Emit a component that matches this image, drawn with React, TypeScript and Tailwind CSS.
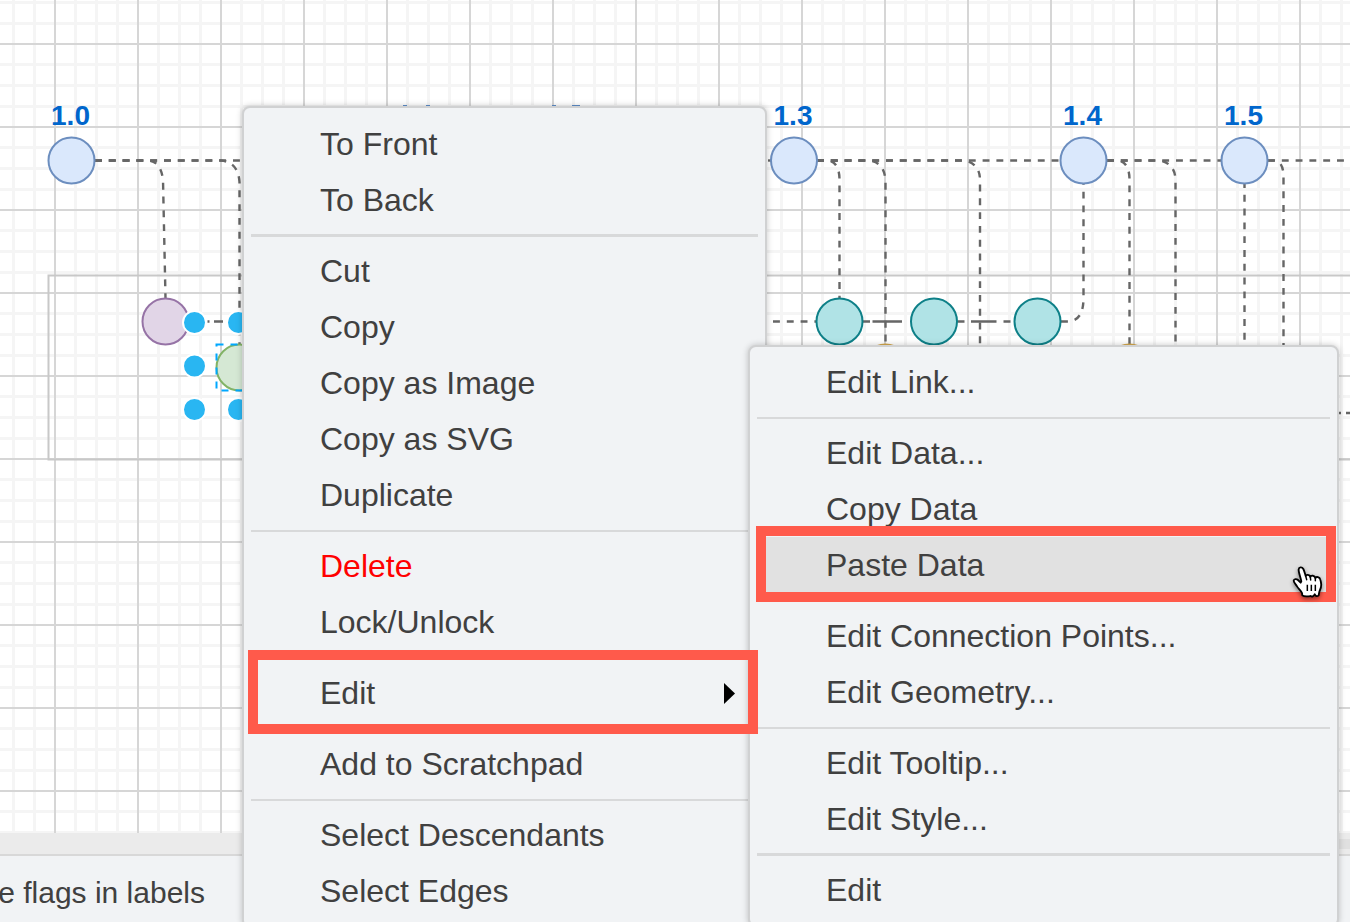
import React from "react";

type Entry =
  | { kind: "item"; label: string; danger?: boolean; active?: boolean; submenu?: boolean }
  | { kind: "separator"; heavy?: boolean };

const contextEntries: Entry[] = [
  { kind: "item", label: "To Front" },
  { kind: "item", label: "To Back" },
  { kind: "separator", heavy: true },
  { kind: "item", label: "Cut" },
  { kind: "item", label: "Copy" },
  { kind: "item", label: "Copy as Image" },
  { kind: "item", label: "Copy as SVG" },
  { kind: "item", label: "Duplicate" },
  { kind: "separator" },
  { kind: "item", label: "Delete", danger: true },
  { kind: "item", label: "Lock/Unlock" },
  { kind: "separator" },
  { kind: "item", label: "Edit", submenu: true },
  { kind: "separator" },
  { kind: "item", label: "Add to Scratchpad" },
  { kind: "separator" },
  { kind: "item", label: "Select Descendants" },
  { kind: "item", label: "Select Edges" },
];

const editEntries: Entry[] = [
  { kind: "item", label: "Edit Link..." },
  { kind: "separator" },
  { kind: "item", label: "Edit Data..." },
  { kind: "item", label: "Copy Data" },
  { kind: "item", label: "Paste Data", active: true },
  { kind: "separator" },
  { kind: "item", label: "Edit Connection Points..." },
  { kind: "item", label: "Edit Geometry..." },
  { kind: "separator" },
  { kind: "item", label: "Edit Tooltip..." },
  { kind: "item", label: "Edit Style..." },
  { kind: "separator", heavy: true },
  { kind: "item", label: "Edit" },
];

function Menu({ label, entries, className }: { label: string; entries: Entry[]; className: string }) {
  return (
    <div
      role="menu"
      aria-label={label}
      className={`absolute flex flex-col rounded-lg border-2 border-[#d0d1d2] bg-[#f1f3f5] px-[7px] pb-[7px] shadow-[0_0_6px_rgba(0,0,0,0.22)] ${className}`}
    >
      {entries.map((entry, i) =>
        entry.kind === "separator" ? (
          <div key={i} role="separator" className="flex h-[15px] items-center">
            <div className={`w-full bg-[#d8d9da] ${entry.heavy ? "h-[3px]" : "h-[2px]"}`} />
          </div>
        ) : (
          <button
            key={i}
            type="button"
            role="menuitem"
            aria-haspopup={entry.submenu ? "menu" : undefined}
            className={`flex h-14 items-center justify-between pr-[22px] pl-[69px] text-left text-[32px] leading-[56px] whitespace-nowrap ${
              entry.danger ? "text-[#ff0000]" : "text-[#404040]"
            } ${entry.active ? "bg-[#e1e1e1]" : ""}`}
          >
            <span>{entry.label}</span>
            {entry.submenu && (
              <svg width="12" height="22" viewBox="0 0 12 22" aria-hidden="true">
                <path d="M0 1 L11 11.5 L0 22 Z" fill="#000" />
              </svg>
            )}
          </button>
        )
      )}
    </div>
  );
}

const releases = [
  { x: 71.5, label: "1.0" },
  { x: 794, label: "1.3" },
  { x: 1083.5, label: "1.4" },
  { x: 1244.5, label: "1.5" },
];

const dashedEdges = [
  "M95 160.5 H390",
  "M95 160.5 H149 Q161 162 163 180 L165.5 298",
  "M95 160.5 H221 Q238 162 239.5 182 V344",
  "M768 160.5 H771",
  "M817 160.5 H1060",
  "M817 160.5 H829 Q839.5 163 839.5 180 V298",
  "M817 160.5 H869 Q884 162 885.5 180 V344",
  "M817 160.5 H965 Q980 164 980 180 V360",
  "M1107 160.5 H1221",
  "M1107 160.5 H1119 Q1129.5 163 1129.5 180 V344",
  "M1107 160.5 H1159 Q1175 163 1175.5 180 V360",
  "M1268 160.5 H1350",
  "M1268 160.5 H1274 Q1283.5 161 1283.5 177 V360",
  "M1061 321.5 H1068 Q1083.5 321 1083.5 298 V184",
  "M773 321.5 H816",
];

const solidEdges = [
  "M207.5 321.5 H209.5 M214 321.5 H223",
  "M863 321.5 H870 M872.5 321.5 H902",
  "M957.5 321.5 H964.5 M971 321.5 H996.5 M1003.5 321.5 H1010.5",
  "M1339 413 H1341 M1346 413 H1353",
];

const handles = [
  [194.5, 322.5],
  [194.5, 366],
  [194.5, 409.5],
  [238.5, 322.5],
  [238.5, 409.5],
];

function Diagram() {
  return (
    <svg className="block h-full w-full" aria-label="Release history diagram">
      <defs>
        <pattern id="grid" x="54" y="43" width="83" height="83" patternUnits="userSpaceOnUse">
          <g fill="#f5f5f5">
            <rect x="20" width="3" height="83" />
            <rect x="41" width="3" height="83" />
            <rect x="62" width="3" height="83" />
            <rect y="20" width="83" height="3" />
            <rect y="41" width="83" height="3" />
            <rect y="62" width="83" height="3" />
          </g>
          <rect width="2" height="83" fill="#d6d6d6" />
          <rect width="83" height="2" fill="#d6d6d6" />
        </pattern>
      </defs>
      <rect width="100%" height="100%" fill="#fff" />
      <rect width="100%" height="100%" fill="url(#grid)" />
      <rect x="48.5" y="275.5" width="1400" height="184" fill="none" stroke="#c8c8c8" strokeWidth="2" />

      <g fill="none" stroke="#666" strokeWidth="2.4">
        {dashedEdges.map((d) => (
          <path key={d} d={d} strokeDasharray="6.9 6.9" />
        ))}
        {solidEdges.map((d) => (
          <path key={d} d={d} />
        ))}
        <path d="M1244.5 184 V360" strokeDasharray="6.9 6.9" strokeDashoffset="3" />
      </g>

      <g strokeWidth="2">
        <g fill="#dae8fc" stroke="#6c8ebf">
          {releases.map((r) => (
            <circle key={r.label} cx={r.x} cy="160.5" r="23" />
          ))}
        </g>
        <circle cx="165.5" cy="321.5" r="23" fill="#e1d5e7" stroke="#9673a6" />
        <circle cx="239.5" cy="367.5" r="23" fill="#d5e8d4" stroke="#82b366" />
        <g fill="#b0e3e6" stroke="#0e8088">
          <circle cx="839.5" cy="321.5" r="23" />
          <circle cx="934" cy="321.5" r="23" />
          <circle cx="1037.5" cy="321.5" r="23" />
        </g>
        <g fill="#ffe6cc" stroke="#d6a94e">
          <circle cx="885.5" cy="367.5" r="23" />
          <circle cx="1129.5" cy="367.5" r="23" />
        </g>
      </g>

      <g fill="#0066cc" fontSize="28" fontWeight="700" textAnchor="middle">
        {releases.map((r) => (
          <text key={r.label} x={r.x - 1} y="125">
            {r.label}
          </text>
        ))}
      </g>
      <path d="M403 105.5 h4 M426 105.5 h4 M552 105.5 h4 M572 105.5 h8" stroke="#5f8fcb" strokeWidth="1" />

      <rect x="216.5" y="344.5" width="46" height="46" fill="none" stroke="#00a8ff" strokeWidth="2" strokeDasharray="7 7" />
      <g fill="#29b6f2" stroke="#fff" strokeWidth="2">
        {handles.map(([x, y]) => (
          <circle key={`${x}-${y}`} cx={x} cy={y} r="11.5" />
        ))}
      </g>
    </svg>
  );
}

function HandCursor() {
  return (
    <svg
      className="pointer-events-none absolute top-[560px] left-[1285px] h-11 w-11 drop-shadow-[0_2px_2px_rgba(0,0,0,0.45)]"
      viewBox="0 0 132 132"
      aria-hidden="true"
    >
      <path
        d="M52 106 L51 99 C48 92 40 86 36 79 C33 74 26 67 26 62 C27 56 35 56 39 60 L47 68 L49 64 C47 53 40 36 41 28 C42 21 51 20 55 27 C58 33 60 42 62 48 C63 43 74 43 76 51 C78 45 89 46 91 54 C94 49 104 50 106 59 C109 68 110 80 105 90 C102 96 102 101 101 106 C96 111 92 108 89 103 C86 109 81 111 77 108 C70 109 58 111 52 106 Z"
        fill="#fff"
        stroke="#000"
        strokeWidth="5.5"
        strokeLinejoin="round"
      />
      <path d="M62 48 L65 59 M76 51 L77 60 M91 54 L91 62" stroke="#000" strokeWidth="4.5" strokeLinecap="round" />
      <path d="M67 74 V93 M79 74 V93 M91 74 V93" stroke="#000" strokeWidth="4.5" />
    </svg>
  );
}

export default function App() {
  return (
    <div className="relative flex h-screen flex-col overflow-hidden bg-white font-['Liberation_Sans',Arial,sans-serif] text-[#404040]">
      <main className="min-h-0 flex-1">
        <Diagram />
      </main>
      <div className="flex h-[21px] items-center justify-end bg-[#ebebeb]">
        <div className="h-[10px] w-1/2 bg-[#e0e0e0]" />
      </div>
      <footer className="flex h-[68px] items-center border-t-2 border-[#d8d8d8] bg-[#f1f3f5]">
        <div className="flex w-[205px] justify-end text-[30px] leading-9 whitespace-nowrap">
          <span className="pt-2">e flags in labels</span>
        </div>
      </footer>

      <Menu label="Shape" entries={contextEntries} className="top-[106px] left-[242px] w-[525px] pt-2" />
      <Menu label="Edit" entries={editEntries} className="top-[345px] left-[748px] w-[591px] pt-[7px]" />

      <div className="pointer-events-none absolute top-[650px] left-[248px] h-[84px] w-[510px] border-[10px] border-[#ff5a4b]" />
      <div className="pointer-events-none absolute top-[526px] left-[756px] h-[76px] w-[580px] border-[10px] border-[#ff5a4b]" />
      <HandCursor />
    </div>
  );
}
